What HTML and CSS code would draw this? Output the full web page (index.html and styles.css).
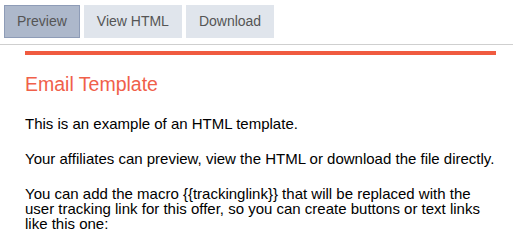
FILE: index.html
```html
<!DOCTYPE html>
<html lang="en">
<head>
  <meta charset="UTF-8">
  <title>Email Template</title>
  <link rel="stylesheet" href="styles.css">
</head>
<body>

  <!-- ====== Tabs ====== -->
  <div class="tabs">
    <button class="tab active" type="button">Preview</button>
    <button class="tab" type="button">View HTML</button>
    <button class="tab" type="button">Download</button>
  </div>

  <!-- ====== Preview ====== -->
  <div class="preview">
    <div class="email">
      <h2>Email Template</h2>
      <p>This is an example of an HTML template.</p>
      <p>Your affiliates can preview, view the HTML or download the file directly.</p>
      <p>You can add the macro {{trackinglink}} that will be replaced with the user tracking link for this offer, so you can create buttons or text links like this one:</p>
    </div>
  </div>

</body>
</html>
```

FILE: styles.css
```css
/* ====== CSS ====== */
body {
  margin: 0;
  font-family: "Liberation Sans", Arial, sans-serif;
  background: #fff;
  color: #000;
}
.tabs {
  display: flex;
  gap: 4px;
  padding: 5px 4px 6px;
  border-bottom: 1px solid #cfcfcf;
}
.tab {
  font-family: inherit;
  font-size: 14px;
  color: #555;
  background: #e0e5ec;
  border: 1px solid #e0e5ec;
  padding: 7px 12px;
  line-height: 17px;
  cursor: pointer;
}
.tab.active {
  background: #adb8cb;
  border-color: #8e9cb7;
}
.preview {
  padding: 6px 17px 0 25px;
  font-size: 15px;
}
.email {
  border-top: 4px solid #f05b40;
}
.email h2 {
  margin: 18px 0 20px;
  font-size: 1.3em;
  font-weight: normal;
  color: #f0604a;
}
.email p {
  margin: 20px 0;
  line-height: 15px;
}
```
